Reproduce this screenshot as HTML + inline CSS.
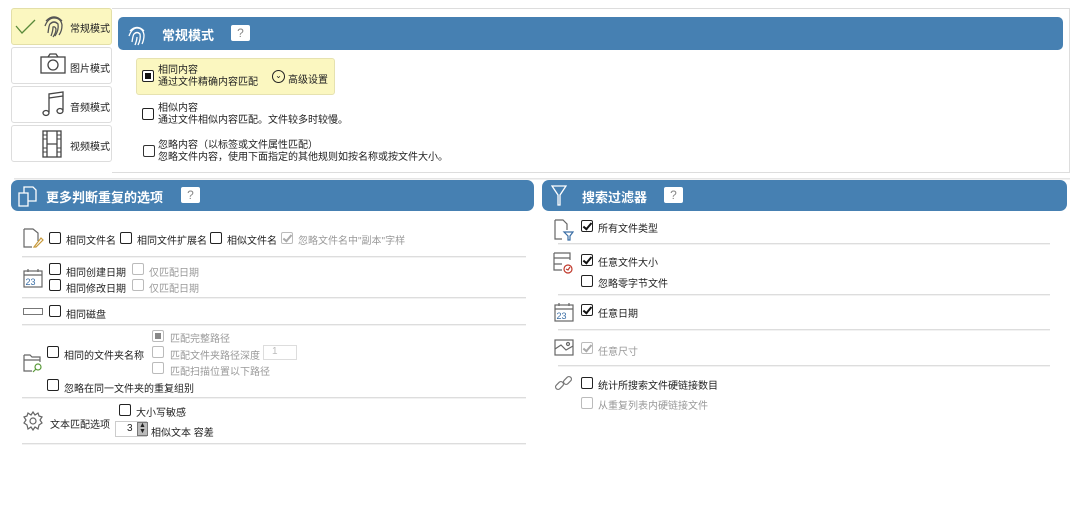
<!DOCTYPE html>
<html><head><meta charset="utf-8"><style>
*{margin:0;padding:0;box-sizing:border-box}
body{width:1078px;height:527px;background:#fff;position:relative;overflow:hidden;font-family:"Liberation Sans","Noto Sans CJK SC",sans-serif;font-size:10px;color:#222}
.a{position:absolute;white-space:nowrap}
.tab{position:absolute;left:11px;width:101px;height:37px;border:1px solid #ddd;border-radius:3px;background:#fff}
.hdr{position:absolute;background:#4680b2;border-radius:5px;color:#fff;font-weight:bold;font-size:13px}
.q{display:inline-block;width:19px;height:16px;background:#fff;border-radius:2px;color:#888;font-size:12px;text-align:center;line-height:16px;font-weight:normal}
.cb{position:absolute;width:12px;height:12px;border:1.3px solid #222;border-radius:2px;background:#fff}
.cb.g{border-color:#bbb}
.ck::after{content:"";position:absolute;left:3px;top:0;width:3px;height:7px;border:solid #111;border-width:0 2px 2px 0;transform:rotate(40deg)}
.ck.g::after{border-color:#aaa}
.sep{position:absolute;height:1px;background:#ddd;box-shadow:0 1px 0 #f2f2f2}
.gr{color:#999}
</style></head><body>
<!-- main panel -->
<div class="a" style="left:112px;top:8px;width:958px;height:165px;border:1px solid #ddd;border-left:none"></div>
<div class="tab" style="top:8px;background:#fbf7c0;border-color:#e3dfa8"></div>
<div class="tab" style="top:47px"></div>
<div class="tab" style="top:86px"></div>
<div class="tab" style="top:125px"></div>
<svg class="a" style="left:14px;top:18px" width="24" height="18"><path d="M2 8 L8 15 L21 2" stroke="#5a8a3a" fill="none" stroke-width="1.3"/></svg>
<svg class="a" style="left:42px;top:13px" width="24" height="26" fill="none" stroke="#555" stroke-width="1.3"><path d="M4 8 Q12 0 20 8"/><path d="M3 13 Q6 5 12 5 Q19 5 20 12 Q20 18 17 22"/><path d="M6 20 Q7 12 8 11 Q12 7 16 11 Q17 17 13 23"/><path d="M9 23 Q11 18 11 14 Q13 13 14 16 Q14 20 11 24"/></svg>
<div class="a" style="left:70px;top:20px;font-size:10px">常规模式</div>
<svg class="a" style="left:40px;top:53px" width="26" height="22" fill="none" stroke="#444" stroke-width="1.3"><rect x="1" y="4" width="24" height="16"/><circle cx="13" cy="12" r="5"/><path d="M8 4 L10 1 L16 1 L18 4"/></svg>
<div class="a" style="left:70px;top:60px">图片模式</div>
<svg class="a" style="left:42px;top:90px" width="24" height="28" fill="none" stroke="#444" stroke-width="1.3"><path d="M7 22 V4 L21 2 V20"/><path d="M7 8 L21 6"/><ellipse cx="4" cy="23" rx="3" ry="2.5"/><ellipse cx="18" cy="21" rx="3" ry="2.5"/></svg>
<div class="a" style="left:70px;top:99px">音频模式</div>
<svg class="a" style="left:42px;top:130px" width="20" height="28" fill="none" stroke="#444" stroke-width="1.3"><rect x="1" y="1" width="18" height="26"/><path d="M5 1 V27 M15 1 V27 M5 14 H15"/><path d="M1 5 H5 M1 9 H5 M1 18 H5 M1 22 H5 M15 5 H19 M15 9 H19 M15 18 H19 M15 22 H19" stroke-width="1"/></svg>
<div class="a" style="left:70px;top:138px">视频模式</div>

<div class="hdr" style="left:118px;top:17px;width:945px;height:33px">
<svg class="a" style="left:9px;top:7px" width="20" height="22" fill="none" stroke="#fff" stroke-width="1.3"><path d="M3 7 Q10 0 17 7"/><path d="M2 12 Q5 4 10 4 Q16 4 17 11 Q17 16 15 20"/><path d="M5 18 Q6 11 7 10 Q10 7 13 10 Q14 15 11 21"/><path d="M8 21 Q10 16 10 13"/></svg>
<span class="a" style="left:44px;top:8px">常规模式</span><span class="q a" style="left:113px;top:8px">?</span></div>

<div class="a" style="left:136px;top:58px;width:199px;height:37px;background:#fbf7c0;border:1px solid #e6e2b0;border-radius:3px"></div>
<div class="cb" style="left:142px;top:70px"><div style="position:absolute;left:2px;top:2px;width:6px;height:6px;background:#111"></div></div>
<div class="a" style="left:158px;top:65px;line-height:12px">相同内容<br>通过文件精确内容匹配</div>
<div class="a" style="left:272px;top:70px;width:13px;height:13px;border:1.3px solid #222;border-radius:50%;font-size:8px;text-align:center;line-height:10px">⌄</div>
<div class="a" style="left:288px;top:71px">高级设置</div>
<div class="cb" style="left:142px;top:108px"></div>
<div class="a" style="left:158px;top:103px;line-height:12px">相似内容<br>通过文件相似内容匹配。文件较多时较慢。</div>
<div class="cb" style="left:143px;top:145px;border-color:#333"></div>
<div class="a" style="left:158px;top:140px;line-height:12px">忽略内容（以标签或文件属性匹配）<br>忽略文件内容，使用下面指定的其他规则如按名称或按文件大小。</div>

<div class="sep" style="left:14px;top:178px;width:1056px;background:#e5e5e5"></div>

<!-- left section -->
<div class="hdr" style="left:11px;top:180px;width:523px;height:31px;border-radius:7px">
<svg class="a" style="left:7px;top:5px" width="20" height="22" fill="none" stroke="#fff" stroke-width="1.3"><path d="M1 8 H10 V21 H1 Z"/><path d="M6 8 V2 H15 L18 5 V16 H10"/></svg>
<span class="a" style="left:35px;top:7px">更多判断重复的选项</span><span class="q a" style="left:170px;top:7px">?</span></div>

<svg class="a" style="left:23px;top:228px" width="22" height="20" fill="none" stroke="#666" stroke-width="1.2"><path d="M1 1 H10 L15 5 V13 M1 1 V19 H9"/><path d="M11 19 L18 10 L20 12 L13 19 Z" stroke="#c89a3a"/></svg>
<div class="cb" style="left:49px;top:232px"></div><div class="a" style="left:66px;top:232px">相同文件名</div>
<div class="cb" style="left:120px;top:232px"></div><div class="a" style="left:137px;top:232px">相同文件扩展名</div>
<div class="cb" style="left:210px;top:232px"></div><div class="a" style="left:227px;top:232px">相似文件名</div>
<div class="cb g ck" style="left:281px;top:232px"></div><div class="a gr" style="left:298px;top:232px">忽略文件名中"副本"字样</div>
<div class="sep" style="left:22px;top:256px;width:504px"></div>

<svg class="a" style="left:23px;top:268px" width="20" height="20" fill="none" stroke="#666" stroke-width="1.2"><rect x="1" y="3" width="18" height="16"/><path d="M1 7 H19 M5 1 V4 M15 1 V4"/><text x="2.5" y="17" font-size="9" fill="#3a6ea5" stroke="none" font-family="Liberation Sans">23</text></svg>
<div class="cb" style="left:49px;top:263px"></div><div class="a" style="left:66px;top:264px">相同创建日期</div>
<div class="cb g" style="left:132px;top:263px"></div><div class="a gr" style="left:149px;top:264px">仅匹配日期</div>
<div class="cb" style="left:49px;top:279px"></div><div class="a" style="left:66px;top:280px">相同修改日期</div>
<div class="cb g" style="left:132px;top:279px"></div><div class="a gr" style="left:149px;top:280px">仅匹配日期</div>
<div class="sep" style="left:22px;top:297px;width:504px"></div>

<div class="a" style="left:23px;top:308px;width:20px;height:7px;border:1px solid #777"></div>
<div class="cb" style="left:49px;top:305px"></div><div class="a" style="left:66px;top:306px">相同磁盘</div>
<div class="sep" style="left:22px;top:324px;width:504px"></div>

<svg class="a" style="left:23px;top:352px" width="22" height="21" fill="none" stroke="#666" stroke-width="1.2"><path d="M1 3 H7 L9 5 H17 V10 M1 3 V19 H9 M1 8 H17"/><circle cx="15" cy="15" r="3" stroke="#5a9a3a"/><path d="M13 17 L10 20" stroke="#5a9a3a"/></svg>
<div class="cb" style="left:47px;top:346px"></div><div class="a" style="left:64px;top:347px">相同的文件夹名称</div>
<div class="cb g" style="left:152px;top:330px"><div style="position:absolute;left:2px;top:2px;width:6px;height:6px;background:#888"></div></div><div class="a gr" style="left:170px;top:330px">匹配完整路径</div>
<div class="cb g" style="left:152px;top:346px"></div><div class="a gr" style="left:170px;top:347px">匹配文件夹路径深度</div>
<div class="a" style="left:263px;top:345px;width:34px;height:15px;border:1px solid #ddd;color:#bbb;padding-left:8px">1</div>
<div class="cb g" style="left:152px;top:362px"></div><div class="a gr" style="left:170px;top:363px">匹配扫描位置以下路径</div>
<div class="cb" style="left:47px;top:379px"></div><div class="a" style="left:64px;top:380px">忽略在同一文件夹的重复组别</div>
<div class="sep" style="left:22px;top:397px;width:504px"></div>

<svg class="a" style="left:23px;top:411px" width="20" height="20" fill="none" stroke="#666" stroke-width="1.2"><circle cx="10" cy="10" r="3"/><path d="M10 1 L12 4 L15 2 L16 5 L19 6 L17 9 L19 12 L16 14 L15 18 L12 16 L10 19 L8 16 L5 18 L4 14 L1 12 L3 9 L1 6 L4 5 L5 2 L8 4 Z"/></svg>
<div class="a" style="left:50px;top:416px">文本匹配选项</div>
<div class="cb" style="left:119px;top:404px"></div><div class="a" style="left:136px;top:404px">大小写敏感</div>
<div class="a" style="left:115px;top:421px;width:32px;height:16px;border:1px solid #ccc;padding-left:11px;line-height:14px">3</div>
<div class="a" style="left:137px;top:422px;width:11px;height:14px;background:#bbb;border:1px solid #777;font-size:7px;line-height:6px;text-align:center">▲<br>▼</div>
<div class="a" style="left:151px;top:424px">相似文本 容差</div>
<div class="sep" style="left:22px;top:443px;width:504px"></div>

<!-- right section -->
<div class="hdr" style="left:542px;top:180px;width:525px;height:31px;border-radius:7px">
<svg class="a" style="left:9px;top:5px" width="16" height="22" fill="none" stroke="#fff" stroke-width="1.3"><path d="M1 1 H15 L9 10 V20 H7 V10 Z"/></svg>
<span class="a" style="left:40px;top:7px">搜索过滤器</span><span class="q a" style="left:122px;top:7px">?</span></div>

<svg class="a" style="left:554px;top:219px" width="20" height="22" fill="none" stroke="#666" stroke-width="1.2"><path d="M1 1 H9 L13 5 V11 M1 1 V20 H8"/><path d="M10 13 H19 L16 17 V21 H14 V17 Z" stroke="#3a6ea5"/></svg>
<div class="cb ck" style="left:581px;top:220px"></div><div class="a" style="left:598px;top:220px">所有文件类型</div>
<div class="sep" style="left:558px;top:243px;width:492px"></div>

<svg class="a" style="left:553px;top:252px" width="22" height="22" fill="none" stroke="#666" stroke-width="1.2"><path d="M1 1 H17 V8 M1 1 V18 H9 M1 6 H17 M1 12 H9"/><circle cx="15" cy="17" r="4" stroke="#c0392b"/><path d="M13 17 L15 18 L17 15" stroke="#c0392b"/></svg>
<div class="cb ck" style="left:581px;top:254px"></div><div class="a" style="left:598px;top:254px">任意文件大小</div>
<div class="cb" style="left:581px;top:275px"></div><div class="a" style="left:598px;top:275px">忽略零字节文件</div>
<div class="sep" style="left:558px;top:294px;width:492px"></div>

<svg class="a" style="left:554px;top:302px" width="20" height="20" fill="none" stroke="#666" stroke-width="1.2"><rect x="1" y="3" width="18" height="16"/><path d="M1 7 H19 M5 1 V4 M15 1 V4"/><text x="2.5" y="17" font-size="9" fill="#3a6ea5" stroke="none" font-family="Liberation Sans">23</text></svg>
<div class="cb ck" style="left:581px;top:304px"></div><div class="a" style="left:598px;top:305px">任意日期</div>
<div class="sep" style="left:558px;top:329px;width:492px"></div>

<svg class="a" style="left:554px;top:339px" width="20" height="17" fill="none" stroke="#666" stroke-width="1.2"><rect x="1" y="1" width="18" height="15"/><path d="M1 10 L7 6 L12 11 L19 7"/><circle cx="14" cy="5" r="1.5"/></svg>
<div class="cb g ck" style="left:581px;top:342px"></div><div class="a gr" style="left:598px;top:343px">任意尺寸</div>
<div class="sep" style="left:558px;top:365px;width:492px"></div>

<svg class="a" style="left:554px;top:374px" width="20" height="20" fill="none" stroke="#777" stroke-width="1.2"><rect x="1" y="9" width="9" height="5" rx="2.5" transform="rotate(-45 5.5 11.5)"/><rect x="9" y="4" width="9" height="5" rx="2.5" transform="rotate(-45 13.5 6.5)"/></svg>
<div class="cb" style="left:581px;top:377px"></div><div class="a" style="left:598px;top:377px">统计所搜索文件硬链接数目</div>
<div class="cb g" style="left:581px;top:397px"></div><div class="a gr" style="left:598px;top:397px">从重复列表内硬链接文件</div>
</body></html>
